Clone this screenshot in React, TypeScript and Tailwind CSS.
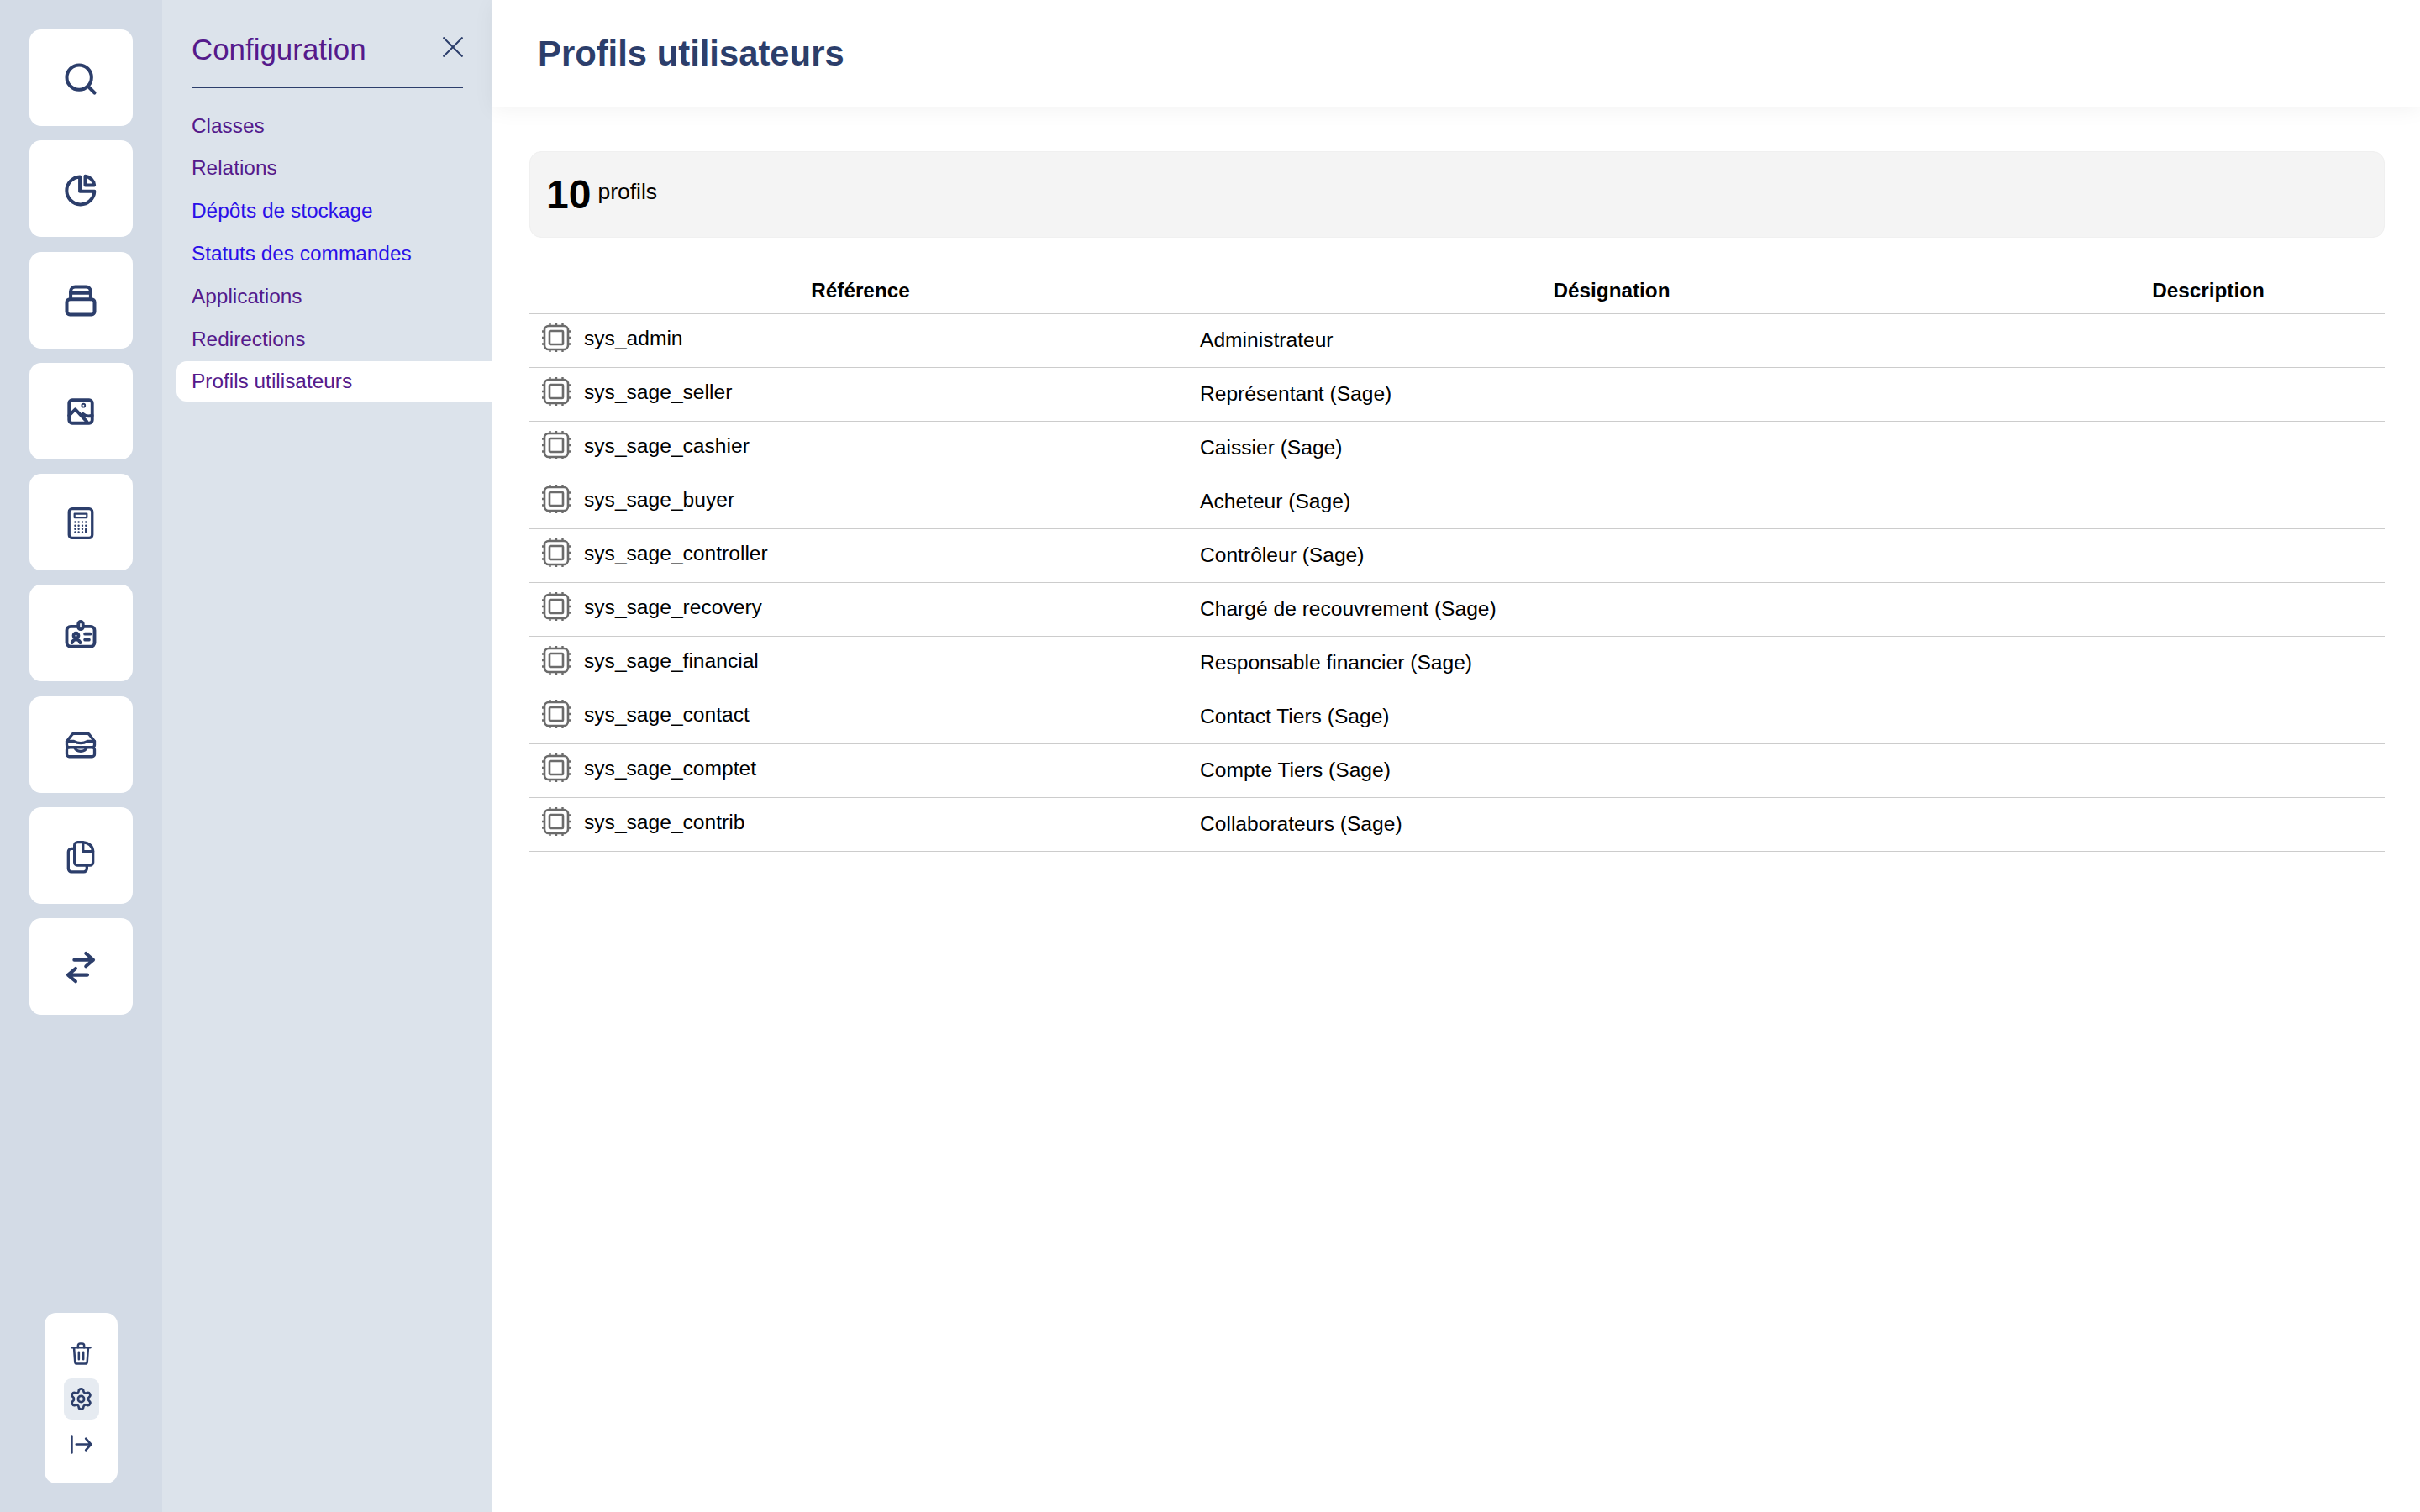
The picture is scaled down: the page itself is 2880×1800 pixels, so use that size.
import { Settings, Search } from 'lucide-react';
import type { ReactNode } from 'react';

const navy = '#2c3e6b';

function Glyph({ size = 44, stroke = 2.1, children }: { size?: number; stroke?: number; children: ReactNode }) {
  return (
    <svg
      width={size}
      height={size}
      viewBox="0 0 24 24"
      fill="none"
      stroke={navy}
      strokeWidth={stroke}
      strokeLinecap="round"
      strokeLinejoin="round"
    >
      {children}
    </svg>
  );
}

const railIcons: ReactNode[] = [
  <Search key="search" size={44} color={navy} strokeWidth={2.2} />,
  <Glyph key="pie" stroke={2.2}>
    <path d="M11.5 3.5a9 9 0 1 0 9.4 9.5h-9.4z" />
    <path d="M15 3.2a6.5 6.5 0 0 1 5.8 5.8H15z" />
  </Glyph>,
  <Glyph key="stack" stroke={2.2}>
    <rect x="3" y="11" width="18" height="10" rx="2" />
    <path d="M5.5 11V6a3 3 0 0 1 3-3h7a3 3 0 0 1 3 3v5" />
    <path d="M5.5 7h13" />
  </Glyph>,
  <Glyph key="image">
    <rect x="4.5" y="4.5" width="15" height="15" rx="2" />
    <path d="M4.5 14.5l4-4 7.5 8" />
    <path d="M13.5 13.5c1.5 1.5 3 2 6 1" />
    <circle cx="13.8" cy="8" r="0.5" />
  </Glyph>,
  <Glyph key="calc" stroke={1.8}>
    <rect x="4.5" y="2.5" width="15" height="19" rx="2" />
    <rect x="8" y="5.8" width="8" height="2.4" strokeWidth={1.2} />
    <path
      strokeWidth={1.3}
      d="M8.4 11.2h.01M10.7 11.2h.01M13.1 11.2h.01M15.4 11.2h.01M8.4 13.5h.01M10.7 13.5h.01M13.1 13.5h.01M15.4 13.5h.01M8.4 15.7h.01M10.7 15.7h.01M13.1 15.7h.01M15.4 15.7v2M8.4 17.7h.01M10.7 17.7h.01M13.1 17.7h.01"
    />
  </Glyph>,
  <Glyph key="badge">
    <rect x="3" y="7" width="18" height="13" rx="2.5" />
    <rect x="10.5" y="3.8" width="3" height="5" rx="1.5" fill="#fff" />
    <circle cx="9" cy="12.9" r="1.6" />
    <path d="M6.4 17.5c.5-1.4 1.4-2 2.6-2s2.2.6 2.7 2" />
    <path d="M14.8 11.8h3.4M14.8 15.6h2.6" />
  </Glyph>,
  <Glyph key="inbox" stroke={1.8}>
    <path d="M3 9.5L6.5 5q.5-.5 1.5-.5h8q1 0 1.5.5L21 9.5V12a1.5 1.5 0 0 1-1.5 1.5h-15A1.5 1.5 0 0 1 3 12z" />
    <path d="M3 9.5h4.5q4.5 2.5 9 0H21" />
    <path d="M4.5 13.5A1.5 1.5 0 0 0 3 15v3a1.5 1.5 0 0 0 1.5 1.5h15A1.5 1.5 0 0 0 21 18v-3a1.5 1.5 0 0 0-1.5-1.5" />
    <path d="M8 13.5q1 2.5 4 2.5t4-2.5" />
  </Glyph>,
  <Glyph key="docs" stroke={1.8}>
    <path d="M10 2.5h3q7 .5 7 6.5v6.5a2 2 0 0 1-2 2h-8a2 2 0 0 1-2-2v-11a2 2 0 0 1 2-2z" />
    <path d="M13.5 2.5v6H20" />
    <path d="M8 6.7H6a2 2 0 0 0-2 2v11a2 2 0 0 0 2 2h8a2 2 0 0 0 2-2v-2.2" />
  </Glyph>,
  <Glyph key="swap" stroke={2.2}>
    <path d="M7.8 6.9h12.4M15.4 2.7l4.8 4.2-4.8 4.2" />
    <path d="M16.4 16.7H3.8M8.7 12.5l-4.9 4.2 4.9 4.2" />
  </Glyph>,
];

const menu = [
  { label: 'Classes', color: 'text-[#551a8b]' },
  { label: 'Relations', color: 'text-[#551a8b]' },
  { label: 'Dépôts de stockage', color: 'text-[#2a10e8]' },
  { label: 'Statuts des commandes', color: 'text-[#2a10e8]' },
  { label: 'Applications', color: 'text-[#551a8b]' },
  { label: 'Redirections', color: 'text-[#551a8b]' },
  { label: 'Profils utilisateurs', color: 'text-[#551a8b]', active: true },
];

const profiles = [
  ['sys_admin', 'Administrateur'],
  ['sys_sage_seller', 'Représentant (Sage)'],
  ['sys_sage_cashier', 'Caissier (Sage)'],
  ['sys_sage_buyer', 'Acheteur (Sage)'],
  ['sys_sage_controller', 'Contrôleur (Sage)'],
  ['sys_sage_recovery', 'Chargé de recouvrement (Sage)'],
  ['sys_sage_financial', 'Responsable financier (Sage)'],
  ['sys_sage_contact', 'Contact Tiers (Sage)'],
  ['sys_sage_comptet', 'Compte Tiers (Sage)'],
  ['sys_sage_contrib', 'Collaborateurs (Sage)'],
];

function ChipIcon() {
  return (
    <svg width="36" height="36" viewBox="0 0 36 36" fill="none" stroke="#6b6b6b" className="mb-[3px] shrink-0">
      <rect x="4" y="4" width="28" height="28" rx="5" strokeWidth="2.6" />
      <rect x="10" y="10" width="16" height="16" rx="1" strokeWidth="2.6" />
      <path
        strokeWidth="2.4"
        d="M10.5 1v3M18 1v3M25.5 1v3M10.5 32v3M18 32v3M25.5 32v3M1 10.5h3M1 18h3M1 25.5h3M32 10.5h3M32 18h3M32 25.5h3"
      />
    </svg>
  );
}

export default function App() {
  return (
    <div className="flex h-screen w-full overflow-hidden bg-white font-['Liberation_Sans',Arial,sans-serif] text-black">
      <aside className="flex w-[193px] shrink-0 flex-col items-center justify-between bg-[#d3dbe6] pt-[35px] pb-[34px]">
        <div className="flex flex-col gap-[17.3px]">
          {railIcons.map((icon, i) => (
            <div
              key={i}
              className="flex h-[115px] w-[123px] items-center justify-center rounded-[14px] bg-white pt-[2px] pr-[2px]"
            >
              {icon}
            </div>
          ))}
        </div>
        <div className="flex h-[203px] w-[87px] flex-col items-center rounded-[14px] bg-white pt-[34px]">
          <Glyph size={29}>
            <path d="M3 6h18" />
            <path d="M5 6l1 14a2 2 0 0 0 2 2h8a2 2 0 0 0 2-2l1-14" />
            <path d="M9 6V4a2 2 0 0 1 2-2h2a2 2 0 0 1 2 2v2" />
            <path d="M9.8 10.5v7M14.2 10.5v7" />
          </Glyph>
          <div className="mt-[15px] flex h-[49px] w-[42px] items-center justify-center rounded-[9px] bg-[#e6ebf1]">
            <Settings size={29} color={navy} strokeWidth={2.2} />
          </div>
          <div className="mt-[15px]">
            <Glyph size={29} stroke={2.2}>
              <path d="M2.8 3.7v16.6" />
              <path d="M7.3 12h14.4M16.7 6.4l5 5.6-5 5.6" />
            </Glyph>
          </div>
        </div>
      </aside>

      <nav className="w-[393px] shrink-0 bg-[#dce3eb] pt-[36px]">
        <div className="mx-[35px] flex items-start justify-between border-b border-[#2c3e6b] pb-[23px]">
          <h2 className="text-[34.9px] leading-[45px] font-normal text-[#551a8b]">Configuration</h2>
          <svg width="24" height="24" viewBox="0 0 24 24" fill="none" stroke={navy} strokeWidth="2" className="mt-[8px]">
            <path d="M0.5 0.5l23 23M23.5 0.5l-23 23" />
          </svg>
        </div>
        <ul className="mt-[20px] ml-[17px] flex flex-col gap-[2.8px]">
          {menu.map((item) => (
            <li
              key={item.label}
              className={`flex h-[48px] items-center rounded-l-[12px] pt-[2px] pl-[18px] text-[24.4px] ${item.color} ${
                item.active ? 'bg-white' : ''
              }`}
            >
              {item.label}
            </li>
          ))}
        </ul>
      </nav>

      <main className="flex min-w-0 flex-1 flex-col">
        <header className="flex h-[127px] shrink-0 items-center pt-[2px] pl-[54px] shadow-[0_4px_24px_rgba(0,0,0,0.05)]">
          <h1 className="text-[41.8px] font-bold text-[#2c3e6b]">Profils utilisateurs</h1>
        </header>
        <div className="pt-[53px] pr-[42px] pl-[44px]">
          <div className="flex h-[103px] items-center rounded-[14px] border border-[#f0f0f0] bg-[#f4f4f4] pl-[19px]">
            <span className="text-[48px] leading-none font-bold">10</span>
            <span className="mb-[6px] ml-[8px] text-[26.5px]">profils</span>
          </div>
          <table className="mt-[34px] w-full table-fixed border-collapse text-[24.6px]">
            <colgroup>
              <col className="w-[788px]" />
              <col className="w-[1000px]" />
              <col className="w-[420px]" />
            </colgroup>
            <thead>
              <tr className="h-[56px] border-b border-[#cccccc] text-[24.3px]">
                <th className="pt-[2px] font-bold">Référence</th>
                <th className="pt-[2px] font-bold">Désignation</th>
                <th className="pt-[2px] font-bold">Description</th>
              </tr>
            </thead>
            <tbody>
              {profiles.map(([ref, label]) => (
                <tr key={ref} className="h-[64px] border-b border-[#cccccc]">
                  <td className="pb-[4px] pl-[14px]">
                    <div className="flex items-center gap-[15px]">
                      <ChipIcon />
                      <span>{ref}</span>
                    </div>
                  </td>
                  <td className="pl-[10px]">{label}</td>
                  <td />
                </tr>
              ))}
            </tbody>
          </table>
        </div>
      </main>
    </div>
  );
}
